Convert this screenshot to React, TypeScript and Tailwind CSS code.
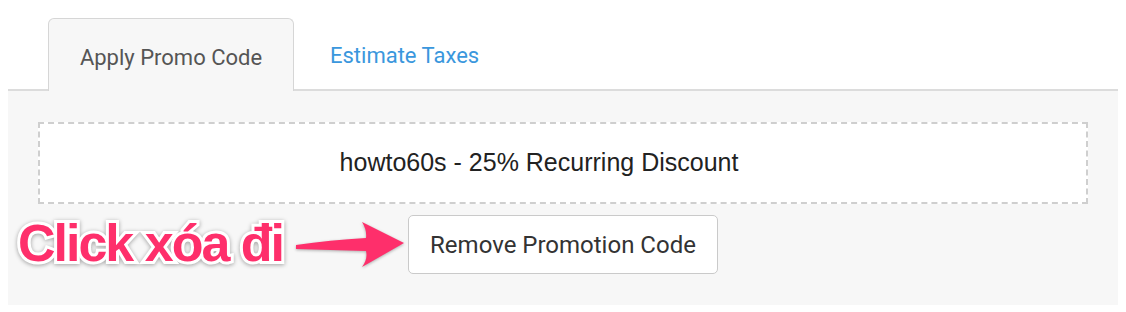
export default function App() {
  return (
    <div className="h-[312px] bg-white px-2 pt-[18px]">
      {/* Tabs */}
      <div className="flex h-[73px] border-b-2 border-[#dcdcdc] pl-[40px]">
        <div className="-mb-[2px] flex w-[246px] items-center justify-center rounded-t-[6px] border border-b-0 border-[#d6d6d6] bg-[#f7f7f7] pt-[4px] font-['Roboto',sans-serif] text-[22px] text-[#555]">
          Apply Promo Code
        </div>
        <div className="flex items-center pl-[36px] pt-[4px] font-['Roboto',sans-serif] text-[22px] text-[#3a97dd]">
          Estimate Taxes
        </div>
      </div>

      {/* Panel */}
      <div className="relative h-[214px] bg-[#f7f7f7] px-[30px] pt-[31px]">
        <div className="flex h-[82px] items-center justify-center border-2 border-dashed border-[#cfcfcf] bg-white pr-[48px] font-['Liberation_Sans',Arial,sans-serif] text-[25px] text-[#222]">
          howto60s - 25% Recurring Discount
        </div>
        <div className="mt-[11px] pl-[370px]">
          <button className="flex h-[59px] w-[310px] items-center justify-center rounded-[5px] border-[1.5px] border-[#cacaca] bg-white font-['Roboto',sans-serif] text-[24px] text-[#333]">
            Remove Promotion Code
          </button>
        </div>

        {/* Annotation */}
        <div className="absolute left-[10px] top-[124px] font-['Liberation_Sans',Arial,sans-serif] text-[52px] font-bold leading-[56px] tracking-[-2px] text-[#fe2f6b] [-webkit-text-stroke:6px_white] [paint-order:stroke_fill] [filter:drop-shadow(0_1px_2px_rgba(0,0,0,0.35))]">
          Click xóa đi
        </div>
        <svg
          className="absolute left-[277px] top-[126px] [filter:drop-shadow(0_1px_1.5px_rgba(0,0,0,0.3))]"
          width="125"
          height="52"
          viewBox="285 217 125 52"
        >
          <path
            d="M296 245 L296 249 Q330 250 366 251 Q368 259 362 267 L404 243 L362 222 Q367 230 366 238 Q330 240 296 245 Z"
            fill="#fe2f6b"
          />
        </svg>
      </div>
    </div>
  );
}
